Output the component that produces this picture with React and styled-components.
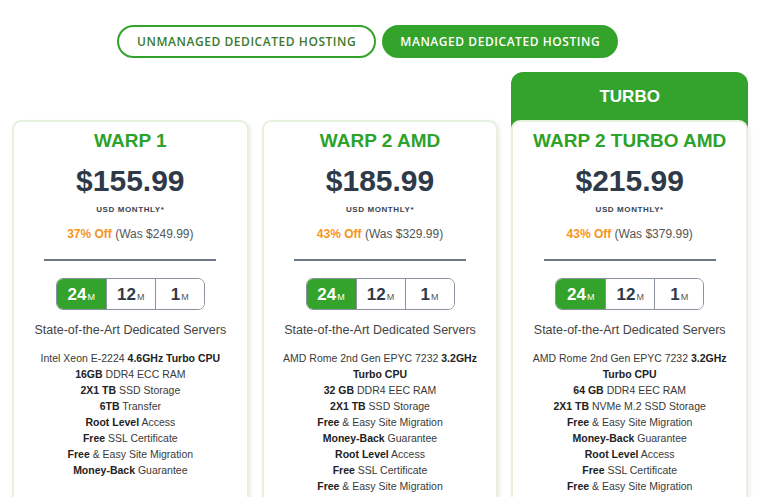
import React from "react";
import styled, { createGlobalStyle } from "styled-components";

const GREEN = "#33a32b";

const Global = createGlobalStyle`
  html, body { margin: 0; padding: 0; background: #fff; }
  body { font-family: "Liberation Sans", Arial, sans-serif; }
  * { box-sizing: border-box; }
`;

const Page = styled.div`
  width: 760px;
  height: 497px;
  overflow: hidden;
  padding-top: 25px;
`;

const ToggleRow = styled.div`
  display: flex;
  gap: 6px;
  padding-left: 117px;
`;

const Toggle = styled.div`
  height: 33px;
  padding: 0 ${(p) => p.$px}px;
  border-radius: 17px;
  border: 2px solid ${GREEN};
  background: ${(p) => (p.$active ? GREEN : "#fff")};
  color: ${(p) => (p.$active ? "#fff" : "#3d7a2c")};
  font-family: "Open Sans", sans-serif;
  font-weight: 600;
  font-size: 12px;
  letter-spacing: 0.55px;
  display: flex;
  align-items: center;
  white-space: nowrap;
`;

const Cards = styled.div`
  display: flex;
  gap: 13px;
  padding: 14px 12px 0;
`;

const Column = styled.div`
  flex: 1;
  display: flex;
  flex-direction: column;
  padding-top: ${(p) => (p.$featured ? 0 : 48)}px;
  background: ${(p) => (p.$featured ? GREEN : "transparent")};
  border-radius: 12px 12px 0 0;
`;

const Ribbon = styled.div`
  height: 48px;
  display: flex;
  align-items: center;
  justify-content: center;
  color: #fff;
  font-weight: 700;
  font-size: 17px;
  padding-top: 1px;
`;

const Card = styled.div`
  background: #fff;
  border: 2px solid #e6f1de;
  border-radius: 9px;
  box-shadow: 2px 2px 4px rgba(0, 0, 0, 0.07);
  padding: 7px 16px 40px;
  display: flex;
  flex-direction: column;
  align-items: center;
  text-align: center;
  min-height: 420px;
  & > * { flex-shrink: 0; }
`;

const Title = styled.div`
  color: #2ea229;
  font-weight: 700;
  font-size: 19px;
  line-height: 24px;
`;

const Price = styled.div`
  margin-top: 10px;
  color: #2f3a48;
  font-weight: 700;
  font-size: 30px;
  line-height: 36px;
`;

const Term = styled.div`
  margin-top: 5px;
  color: #3a4452;
  font-weight: 700;
  font-size: 8px;
  letter-spacing: 0.6px;
  line-height: 12px;
`;

const Offer = styled.div`
  margin-top: 10px;
  font-size: 12px;
  line-height: 16px;
  color: #555;
`;

const Off = styled.span`
  color: #f7941d;
  font-weight: 700;
`;

const Divider = styled.div`
  margin-top: 17px;
  width: 172px;
  height: 2px;
  background: #6d7884;
`;

const Periods = styled.div`
  margin-top: 17px;
  display: flex;
  height: 32px;
  border: 1px solid #8a939d;
  border-radius: 7px;
  overflow: hidden;
`;

const Period = styled.div`
  width: 49px;
  display: flex;
  align-items: baseline;
  justify-content: center;
  padding-top: 6px;
  background: ${(p) => (p.$active ? GREEN : "#fff")};
  color: ${(p) => (p.$active ? "#fff" : "#2f3a48")};
  border-left: ${(p) => (p.$first ? "none" : "1px solid #8a939d")};
  font-weight: 700;
  font-size: 17px;
  line-height: 20px;
`;

const Unit = styled.span`
  font-size: 9px;
  font-weight: 400;
  margin-left: 1px;
  color: ${(p) => (p.$active ? "#fff" : "#555")};
`;

const Tagline = styled.div`
  margin-top: 12px;
  font-size: 12.5px;
  line-height: 16px;
  color: #444;
  white-space: nowrap;
`;

const Features = styled.ul`
  list-style: none;
  margin: 12px 0 0;
  padding: 0;
  max-width: 204px;
  font-size: 10.5px;
  line-height: 16px;
  color: #3a3a3a;
`;

const Feature = styled.li`
  white-space: nowrap;
  b { color: #222; font-weight: 700; }
`;

const plans = [
  {
    name: "WARP 1",
    price: "$155.99",
    off: "37% Off",
    was: "(Was $249.99)",
    features: [
      ["Intel Xeon E-2224 ", "4.6GHz Turbo CPU", ""],
      ["", "16GB", " DDR4 ECC RAM"],
      ["", "2X1 TB", " SSD Storage"],
      ["", "6TB", " Transfer"],
      ["", "Root Level", " Access"],
      ["", "Free", " SSL Certificate"],
      ["", "Free", " & Easy Site Migration"],
      ["", "Money-Back", " Guarantee"],
    ],
  },
  {
    name: "WARP 2 AMD",
    price: "$185.99",
    off: "43% Off",
    was: "(Was $329.99)",
    features: [
      ["AMD Rome 2nd Gen EPYC 7232 ", "3.2GHz", "", "Turbo CPU"],
      ["", "32 GB", " DDR4 EEC RAM"],
      ["", "2X1 TB", " SSD Storage"],
      ["", "Free", " & Easy Site Migration"],
      ["", "Money-Back", " Guarantee"],
      ["", "Root Level", " Access"],
      ["", "Free", " SSL Certificate"],
      ["", "Free", " & Easy Site Migration"],
    ],
  },
  {
    name: "WARP 2 TURBO AMD",
    price: "$215.99",
    off: "43% Off",
    was: "(Was $379.99)",
    featured: true,
    features: [
      ["AMD Rome 2nd Gen EPYC 7232 ", "3.2GHz", "", "Turbo CPU"],
      ["", "64 GB", " DDR4 EEC RAM"],
      ["", "2X1 TB", " NVMe M.2 SSD Storage"],
      ["", "Free", " & Easy Site Migration"],
      ["", "Money-Back", " Guarantee"],
      ["", "Root Level", " Access"],
      ["", "Free", " SSL Certificate"],
      ["", "Free", " & Easy Site Migration"],
    ],
  },
];

const periods = ["24", "12", "1"];

export default function App() {
  return (
    <Page>
      <Global />
      <ToggleRow>
        <Toggle $px={18}>UNMANAGED DEDICATED HOSTING</Toggle>
        <Toggle $px={16} $active>MANAGED DEDICATED HOSTING</Toggle>
      </ToggleRow>
      <Cards>
        {plans.map((p) => (
          <Column key={p.name} $featured={p.featured}>
            {p.featured && <Ribbon>TURBO</Ribbon>}
            <Card>
              <Title>{p.name}</Title>
              <Price>{p.price}</Price>
              <Term>USD MONTHLY*</Term>
              <Offer>
                <Off>{p.off}</Off> {p.was}
              </Offer>
              <Divider />
              <Periods>
                {periods.map((n, i) => (
                  <Period key={n} $active={i === 0} $first={i === 0}>
                    {n}
                    <Unit $active={i === 0}>M</Unit>
                  </Period>
                ))}
              </Periods>
              <Tagline>State-of-the-Art Dedicated Servers</Tagline>
              <Features>
                {p.features.map((f, i) => (
                  <Feature key={i}>
                    {f[0]}
                    <b>{f[1]}</b>
                    {f[2]}
                    {f[3] && (
                      <>
                        <br />
                        <b>{f[3]}</b>
                      </>
                    )}
                  </Feature>
                ))}
              </Features>
            </Card>
          </Column>
        ))}
      </Cards>
    </Page>
  );
}
